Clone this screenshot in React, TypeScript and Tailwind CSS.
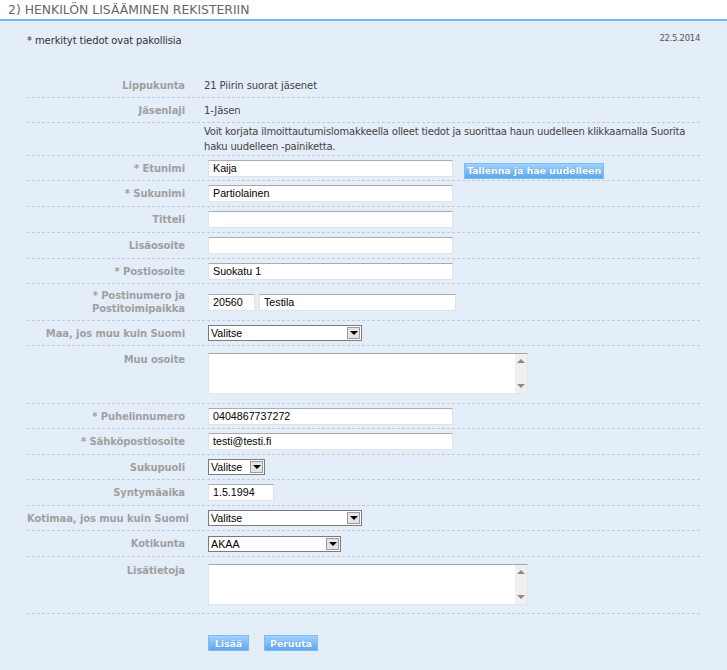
import type { ReactNode } from "react";

const verdana = "font-['DejaVu_Sans',Tahoma,Verdana,sans-serif]";
const arial = "font-['Liberation_Sans',Arial,sans-serif]";

function TextInput({ w, value = "" }: { w: string; value?: string }) {
  return (
    <div
      className={`${w} ${arial} ml-[4px] h-[17px] border border-[#dfe3e8] border-t-[#a9adb3] bg-white pl-[4px] text-[10.7px] leading-[15px] text-black`}
    >
      {value}
    </div>
  );
}

function Select({ w, value }: { w: string; value: string }) {
  return (
    <div
      className={`${w} ${arial} ml-[4px] flex h-[16px] items-stretch border border-[#7b7b7b] bg-white text-[10.7px] leading-[14px] text-black`}
    >
      <span className="flex-1 pl-[2px]">{value}</span>
      <span className="m-[1px] flex w-[13px] items-center justify-center border border-[#9a9a9a] bg-[#e4e4e4]">
        <span className="h-0 w-0 border-x-[4px] border-t-[4px] border-x-transparent border-t-black" />
      </span>
    </div>
  );
}

function TextArea() {
  return (
    <div className="ml-[4px] flex h-[41px] w-[320px] border border-[#e2e5ea] border-t-[#a3a7ad] bg-white">
      <div className="flex-1" />
      <div className="flex w-[12px] flex-col items-center justify-between bg-[#efefef] py-[5px]">
        <span className="h-0 w-0 border-x-[4px] border-b-[4px] border-x-transparent border-b-[#8a8a8a]" />
        <span className="h-0 w-0 border-x-[4px] border-t-[4px] border-x-transparent border-t-[#8a8a8a]" />
      </div>
    </div>
  );
}

function Btn({ children, w }: { children: ReactNode; w: string }) {
  return (
    <button
      className={`${w} ${verdana} h-[16px] whitespace-nowrap border border-[#7cbcf6] bg-gradient-to-b from-[#9fd2ff] to-[#5ea7ef] text-center text-[9.5px] font-bold leading-[13px] tracking-[-0.1px] text-white [text-shadow:0_0_1px_#3a80c8]`}
    >
      {children}
    </button>
  );
}

function Row({
  label,
  h,
  top = false,
  children,
}: {
  label?: ReactNode;
  h: string;
  top?: boolean;
  children?: ReactNode;
}) {
  return (
    <div
      className={`${h} flex border-b border-dashed border-[#c4cbd3] ${top ? "items-start pt-[7px]" : "items-center"}`}
    >
      <div
        className={`${verdana} w-[158px] shrink-0 whitespace-nowrap text-right text-[10px] font-bold leading-[13px] tracking-[-0.1px] text-[#a0a0a0]`}
      >
        {label}
      </div>
      <div className="flex flex-1 items-center pl-[19px]">{children}</div>
    </div>
  );
}

const valueText = `${verdana} text-[10px] leading-[13px] tracking-[-0.1px] text-[#444]`;

export default function App() {
  return (
    <main className="min-h-[670px] w-full bg-[#e4eef8]">
      {/* HEADER */}
      <div className="h-[21px] border-b-2 border-[#72b8f7] bg-white">
        <h1 className={`${verdana} pl-[8px] pt-[1px] text-[12.4px] leading-[17px] text-[#666]`}>
          2) HENKILÖN LISÄÄMINEN REKISTERIIN
        </h1>
      </div>

      <div className="px-[27px] pt-[13px]">
        <div className="flex items-start justify-between">
          <p className={`${verdana} text-[10px] leading-[13px] tracking-[-0.1px] text-[#333]`}>
            * merkityt tiedot ovat pakollisia
          </p>
          <p className={`${verdana} -mt-[2px] text-[8.5px] leading-[13px] tracking-[-0.3px] text-[#555]`}>
            22.5.2014
          </p>
        </div>

        <div className="mt-[26px]">
          <Row label="Lippukunta" h="h-[25px]">
            <span className={valueText}>21 Piirin suorat jäsenet</span>
          </Row>
          <Row label="Jäsenlaji" h="h-[25px]">
            <span className={valueText}>1-Jäsen</span>
          </Row>
          <Row h="h-[33px]">
            <p className={`${verdana} whitespace-nowrap text-[10px] leading-[15px] tracking-[-0.2px] text-[#444]`}>
              Voit korjata ilmoittautumislomakkeella olleet tiedot ja suorittaa haun uudelleen klikkaamalla Suorita
              <br />
              haku uudelleen -painiketta.
            </p>
          </Row>
          <Row label="* Etunimi" h="h-[25px]">
            <TextInput w="w-[245px]" value="Kaija" />
            <div className="ml-[11px]">
              <Btn w="w-[140px]">Tallenna ja hae uudelleen</Btn>
            </div>
          </Row>
          <Row label="* Sukunimi" h="h-[26px]">
            <TextInput w="w-[245px]" value="Partiolainen" />
          </Row>
          <Row label="Titteli" h="h-[26px]">
            <TextInput w="w-[245px]" />
          </Row>
          <Row label="Lisäosoite" h="h-[26px]">
            <TextInput w="w-[245px]" />
          </Row>
          <Row label="* Postiosoite" h="h-[25px]">
            <TextInput w="w-[245px]" value="Suokatu 1" />
          </Row>
          <Row
            label={
              <>
                * Postinumero ja
                <br />
                Postitoimipaikka
              </>
            }
            h="h-[37px]"
          >
            <TextInput w="w-[47px]" value="20560" />
            <TextInput w="w-[197px]" value="Testila" />
          </Row>
          <Row label="Maa, jos muu kuin Suomi" h="h-[25px]">
            <Select w="w-[154px]" value="Valitse" />
          </Row>
          <Row label="Muu osoite" h="h-[58px]" top>
            <TextArea />
          </Row>
          <Row label="* Puhelinnumero" h="h-[25px]">
            <TextInput w="w-[245px]" value="0404867737272" />
          </Row>
          <Row label="* Sähköpostiosoite" h="h-[26px]">
            <TextInput w="w-[245px]" value="testi@testi.fi" />
          </Row>
          <Row label="Sukupuoli" h="h-[25px]">
            <Select w="w-[57px]" value="Valitse" />
          </Row>
          <Row label="Syntymäaika" h="h-[26px]">
            <TextInput w="w-[66px]" value="1.5.1994" />
          </Row>
          <Row label="Kotimaa, jos muu kuin Suomi" h="h-[25px]">
            <Select w="w-[154px]" value="Valitse" />
          </Row>
          <Row label="Kotikunta" h="h-[26px]">
            <Select w="w-[133px]" value="AKAA" />
          </Row>
          <Row label="Lisätietoja" h="h-[57px]" top>
            <TextArea />
          </Row>
        </div>

        <div className="flex gap-[15px] pl-[181px] pt-[21px]">
          <Btn w="w-[41px]">Lisää</Btn>
          <Btn w="w-[54px]">Peruuta</Btn>
        </div>
      </div>
    </main>
  );
}
